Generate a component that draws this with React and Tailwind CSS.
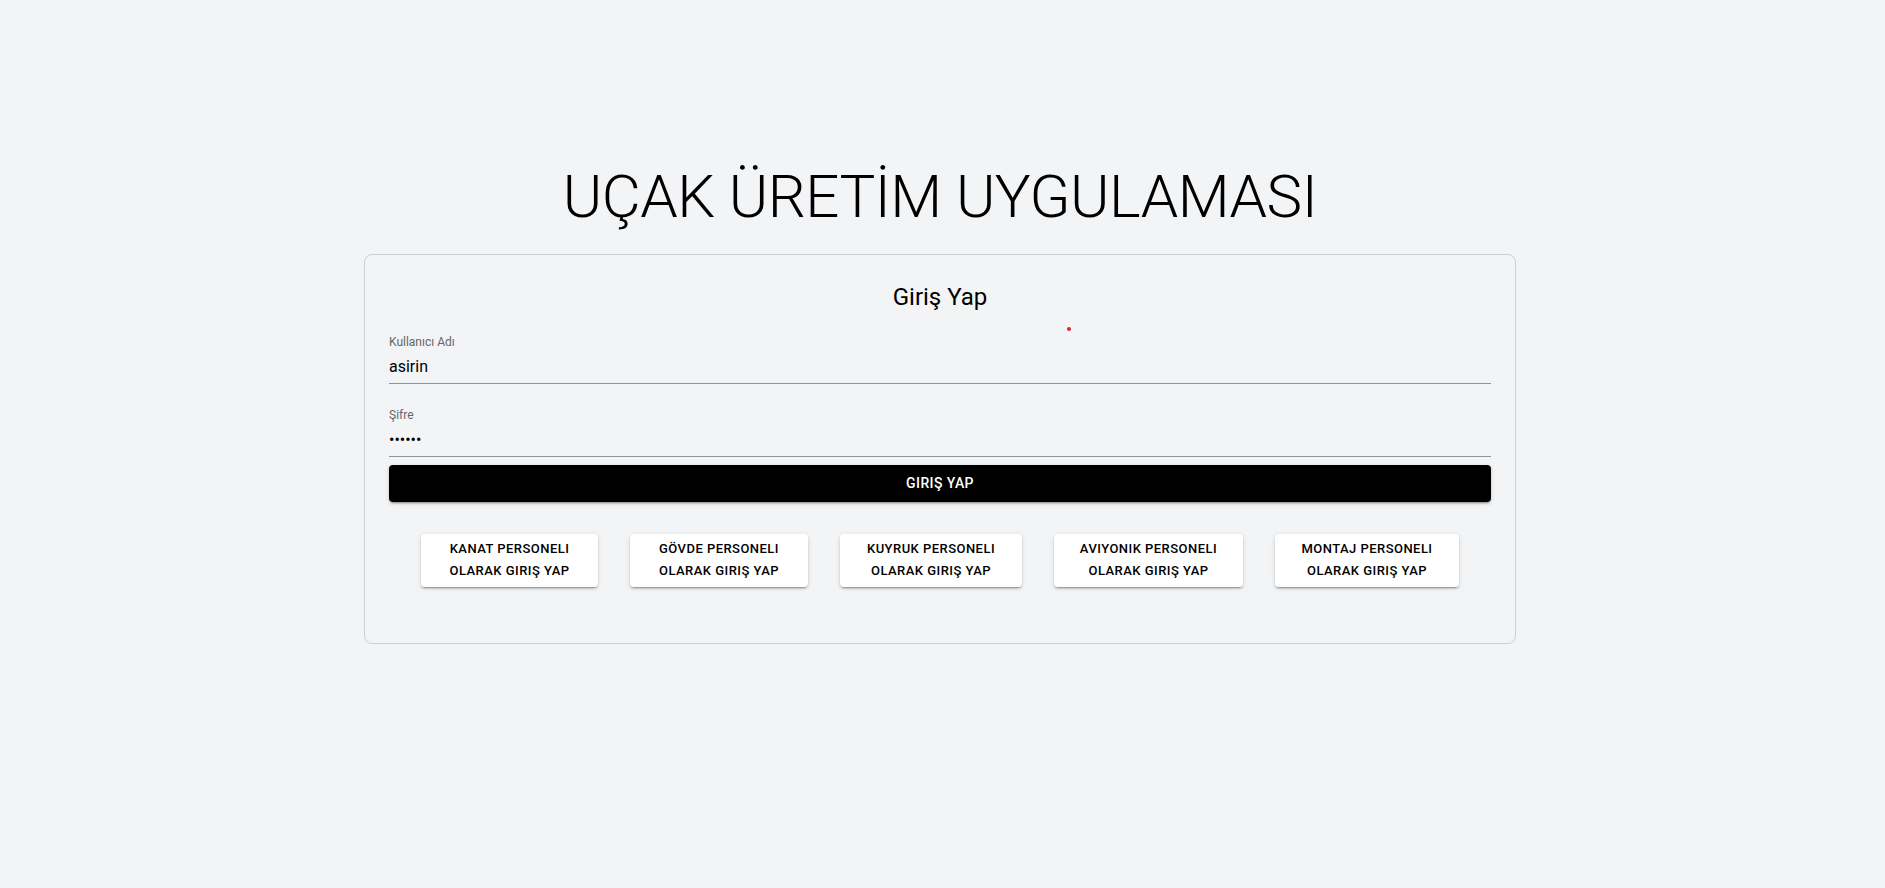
import { useState } from "react";

const roles = [
  { name: "KANAT", width: "w-[177px]" },
  { name: "GÖVDE", width: "w-[178px]" },
  { name: "KUYRUK", width: "w-[182px]" },
  { name: "AVIYONIK", width: "w-[189px]" },
  { name: "MONTAJ", width: "w-[184px]" },
];

const elevation =
  "shadow-[0px_3px_1px_-2px_rgba(0,0,0,0.2),0px_2px_2px_0px_rgba(0,0,0,0.14),0px_1px_5px_0px_rgba(0,0,0,0.12)]";

function Field({ label, type, value, onChange }) {
  return (
    <div className="mt-4 mb-2 flex flex-col">
      <label className="h-4 text-[12px] leading-[14px] text-[#666]">{label}</label>
      <div className="border-b border-[#949494] pt-[4px] pb-[5px]">
        <input
          type={type}
          value={value}
          onChange={(e) => onChange(e.target.value)}
          className="block w-full bg-transparent text-[16px] leading-[23px] h-[23px] text-black outline-none"
        />
      </div>
    </div>
  );
}

function App() {
  const [username, setUsername] = useState("asirin");
  const [password, setPassword] = useState("123456");

  return (
    <div className="min-h-screen bg-[#f3f4f6] pr-[5px] pt-[161px] font-['Roboto',sans-serif] text-black">
      <div className="mx-auto w-[1152px]">
        <h1 className="mb-[21px] text-center text-[60px] font-light leading-[72px] tracking-[-0.5px]">
          UÇAK ÜRETİM UYGULAMASI
        </h1>

        <div className="relative flex flex-col rounded-lg border border-[#cfcfcf] p-6">
          <span className="absolute left-[702px] top-[72px] h-[4px] w-[4px] rounded-full bg-[#e3242b]" />
          <h2 className="mb-1 text-center text-[24px] leading-[36px]">Giriş Yap</h2>

          <Field label="Kullanıcı Adı" type="text" value={username} onChange={setUsername} />
          <Field label="Şifre" type="password" value={password} onChange={setPassword} />

          <button
            className={
              "block w-full rounded bg-black py-[6px] text-[14px] font-medium uppercase leading-[24.5px] tracking-[0.4px] text-white " +
              elevation
            }
          >
            GIRIŞ YAP
          </button>

          <div className="mt-8 mb-8 flex justify-center gap-8">
            {roles.map((r) => (
              <button
                key={r.name}
                className={
                  r.width +
                  " rounded bg-white py-[4px] text-center text-[13px] font-medium leading-[22.75px] tracking-[0.46px] text-black " +
                  elevation
                }
              >
                {r.name} PERSONELI
                <br />
                OLARAK GIRIŞ YAP
              </button>
            ))}
          </div>
        </div>
      </div>
    </div>
  );
}

export default App;
